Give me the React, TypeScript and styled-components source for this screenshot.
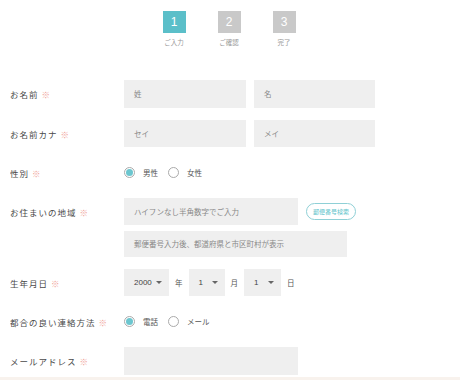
import React from "react";
import styled, { createGlobalStyle } from "styled-components";

const Global = createGlobalStyle`
  html, body { margin: 0; padding: 0; background: #fff; }
  body { font-family: "Noto Sans CJK JP", "Noto Sans", sans-serif; color: #555; }
`;

const Page = styled.div`
  width: 460px;
  display: flex;
  flex-direction: column;
`;

const Steps = styled.div`
  display: flex;
  justify-content: center;
  gap: 32px;
  padding-top: 11px;
  margin-left: -2px;
`;

const Step = styled.div`
  width: 23px;
  display: flex;
  flex-direction: column;
  align-items: center;
  gap: 4px;
`;

const StepBox = styled.div<{ $active?: boolean }>`
  width: 23px;
  height: 22px;
  background: ${(p) => (p.$active ? "#5bbfc9" : "#c9c9c9")};
  color: #fff;
  font-family: "Liberation Sans", sans-serif;
  font-size: 12px;
  display: flex;
  align-items: center;
  justify-content: center;
`;

const StepLabel = styled.div`
  font-size: 6.5px;
  color: #999;
  white-space: nowrap;
  line-height: 10px;
  height: 10px;
`;

const Form = styled.div`
  display: flex;
  flex-direction: column;
  gap: 12px;
  padding: 33px 0 0 10px;
`;

const Row = styled.div<{ $h?: number }>`
  display: flex;
  align-items: flex-start;
  min-height: ${(p) => p.$h ?? 27}px;
`;

const Label = styled.div<{ $h?: number }>`
  width: 114px;
  height: ${(p) => p.$h ?? 27}px;
  overflow: hidden;
  display: flex;
  align-items: center;
  font-size: 8.5px;
  line-height: 12px;
  letter-spacing: 1px;
  color: #4a4a4a;
  white-space: nowrap;
`;

const Req = styled.span`
  color: #f0a49a;
  margin-left: 3px;
  font-size: 8.5px;
  letter-spacing: 0;
  line-height: 12px;
`;

const Field = styled.div<{ $gap?: number }>`
  display: flex;
  align-items: center;
  gap: ${(p) => p.$gap ?? 8}px;
`;

const FieldCol = styled.div`
  display: flex;
  flex-direction: column;
  gap: 6px;
`;

const Input = styled.div<{ $w: number; $h?: number }>`
  width: ${(p) => p.$w}px;
  height: ${(p) => p.$h ?? 27}px;
  background: #efefef;
  box-sizing: border-box;
  padding-left: 10px;
  display: flex;
  align-items: center;
  font-size: 7.5px;
  line-height: 10px;
  color: #888;
  overflow: hidden;
  white-space: nowrap;
`;

const ZipButton = styled.div`
  width: 50px;
  height: 17px;
  box-sizing: border-box;
  border: 1px solid #8fd0d6;
  border-radius: 9px;
  color: #5bbfc9;
  font-size: 6px;
  line-height: 8px;
  display: flex;
  align-items: center;
  justify-content: center;
`;

const Radios = styled.div`
  display: flex;
  align-items: center;
  height: 27px;
  overflow: hidden;
`;

const Radio = styled.span<{ $checked?: boolean }>`
  width: 11px;
  height: 11px;
  box-sizing: border-box;
  border-radius: 50%;
  border: 1px solid #aaa;
  display: inline-flex;
  align-items: center;
  justify-content: center;
  &::after {
    content: "";
    width: 7px;
    height: 7px;
    border-radius: 50%;
    background: ${(p) => (p.$checked ? "#6cc6cf" : "transparent")};
  }
`;

const RadioText = styled.span`
  font-size: 7.5px;
  line-height: 10px;
  color: #555;
  margin: 0 10px 0 8px;
`;

const Select = styled.div<{ $w: number }>`
  width: ${(p) => p.$w}px;
  height: 27px;
  background: #efefef;
  box-sizing: border-box;
  padding: 0 7px 0 10px;
  display: flex;
  align-items: center;
  justify-content: space-between;
  font-family: "Liberation Sans", sans-serif;
  font-size: 8px;
  line-height: 10px;
  color: #444;
`;

const Caret = styled.span`
  width: 0;
  height: 0;
  border-left: 3px solid transparent;
  border-right: 3px solid transparent;
  border-top: 3px solid #666;
`;

const Unit = styled.span`
  font-size: 7.5px;
  line-height: 10px;
  color: #555;
  margin: 0 6px;
`;

const Footer = styled.div`
  height: 10px;
  margin-top: 2px;
  background: #f8f2ed;
`;

const Lbl = ({ children, h }: { children: React.ReactNode; h?: number }) => (
  <Label $h={h}>
    {children}
    <Req>※</Req>
  </Label>
);

export default function App() {
  return (
    <Page>
      <Global />
      <Steps>
        <Step>
          <StepBox $active>1</StepBox>
          <StepLabel>ご入力</StepLabel>
        </Step>
        <Step>
          <StepBox>2</StepBox>
          <StepLabel>ご確認</StepLabel>
        </Step>
        <Step>
          <StepBox>3</StepBox>
          <StepLabel>完了</StepLabel>
        </Step>
      </Steps>
      <Form>
        <Row $h={28}>
          <Lbl h={28}>お名前</Lbl>
          <Field>
            <Input $w={122} $h={28}>姓</Input>
            <Input $w={121} $h={28}>名</Input>
          </Field>
        </Row>
        <Row>
          <Lbl>お名前カナ</Lbl>
          <Field>
            <Input $w={122}>セイ</Input>
            <Input $w={121}>メイ</Input>
          </Field>
        </Row>
        <Row>
          <Lbl>性別</Lbl>
          <Radios>
            <Radio $checked />
            <RadioText>男性</RadioText>
            <Radio />
            <RadioText>女性</RadioText>
          </Radios>
        </Row>
        <Row>
          <Lbl>お住まいの地域</Lbl>
          <FieldCol>
            <Field>
              <Input $w={174}>ハイフンなし半角数字でご入力</Input>
              <ZipButton>郵便番号検索</ZipButton>
            </Field>
            <Input $w={223} $h={26}>郵便番号入力後、都道府県と市区町村が表示</Input>
          </FieldCol>
        </Row>
        <Row>
          <Lbl>生年月日</Lbl>
          <Field $gap={0}>
            <Select $w={45}>
              2000
              <Caret />
            </Select>
            <Unit>年</Unit>
            <Select $w={36}>
              1
              <Caret />
            </Select>
            <Unit>月</Unit>
            <Select $w={37}>
              1
              <Caret />
            </Select>
            <Unit>日</Unit>
          </Field>
        </Row>
        <Row>
          <Lbl>都合の良い連絡方法</Lbl>
          <Radios>
            <Radio $checked />
            <RadioText>電話</RadioText>
            <Radio />
            <RadioText>メール</RadioText>
          </Radios>
        </Row>
        <Row>
          <Lbl>メールアドレス</Lbl>
          <Input $w={174} $h={28} />
        </Row>
      </Form>
      <Footer />
    </Page>
  );
}
